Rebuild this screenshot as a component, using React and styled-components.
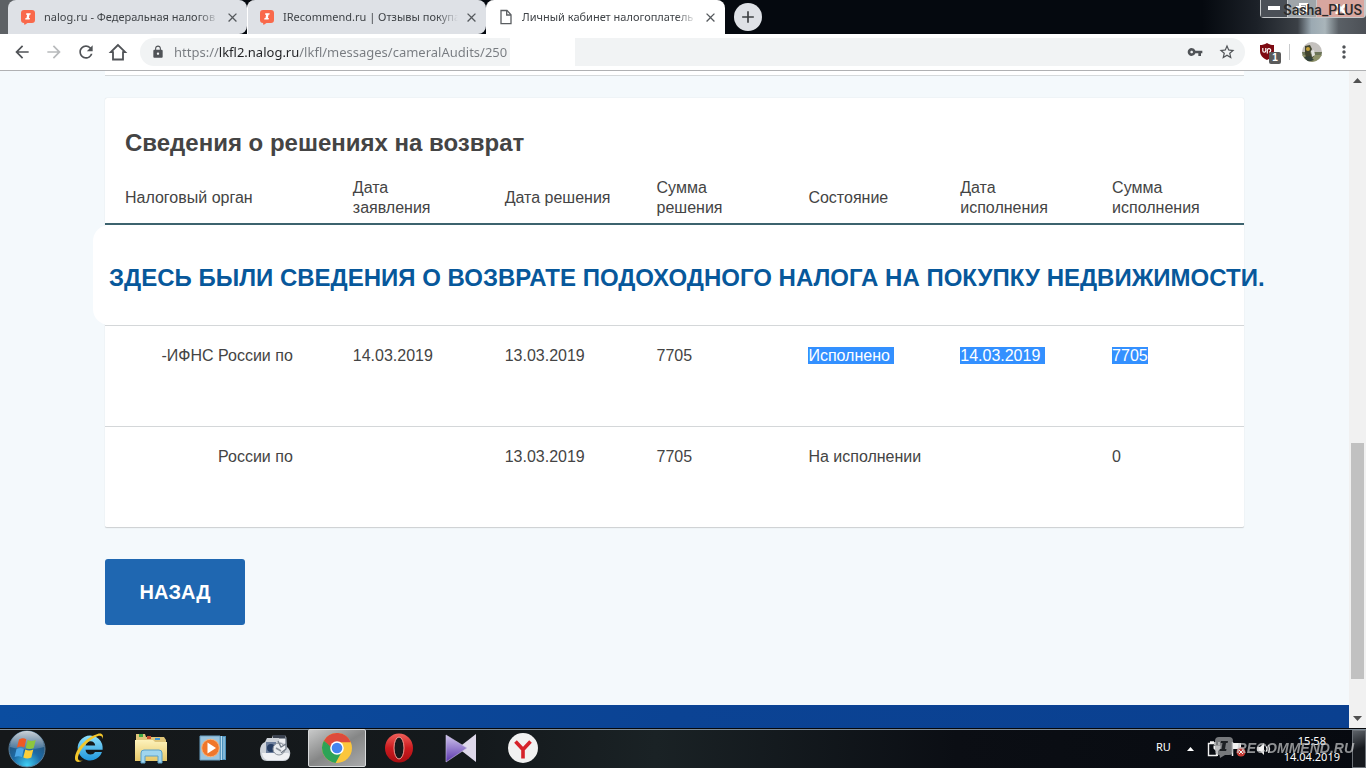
import React from "react";
import styled, { createGlobalStyle } from "styled-components";
import { MdArrowBack, MdArrowForward, MdRefresh, MdLock, MdVpnKey, MdStarBorder, MdMoreVert, MdClose, MdAdd } from "react-icons/md";

const tabs = [
    { title: "nalog.ru - Федеральная налогов", icon: "rec" },
    { title: "IRecommend.ru | Отзывы покупа", icon: "rec" },
    { title: "Личный кабинет налогоплатель", icon: "page", active: true },
];

const columns = [
    "Налоговый орган",
    "Дата заявления",
    "Дата решения",
    "Сумма решения",
    "Состояние",
    "Дата исполнения",
    "Сумма исполнения",
];

const rows = [
    { selected: true, cells: ["-ИФНС России по", "14.03.2019", "13.03.2019", "7705", "Исполнено ", "14.03.2019 ", "7705"] },
    { cells: ["России по", "", "13.03.2019", "7705", "На исполнении", "", "0"] },
];

function RecIcon () {
    return (
        <svg width="16" height="16" viewBox="0 0 16 16">
            <path d="M4 1h8a3 3 0 0 1 3 3v7a3 3 0 0 1-3 3H7.500L4.500 16 4 14a3 3 0 0 1-3-3V4a3 3 0 0 1 3-3z" fill="#f9694b" />
            <path d="M6.300 4.300h4.400l-.3 1.500H9.500L8.900 9h1l-.3 1.500H5.200l.3-1.500h1L7.100 5.800H6z" fill="#fff" />
        </svg>
    );
}

function PageIcon () {
    return (
        <svg width="16" height="16" viewBox="0 0 16 16" fill="none" stroke="#5a5d61" strokeWidth="1.300">
            <path d="M3 1.500h6l4 4.200v9H3z" />
            <path d="M8.700 1.500v4.500H13" />
        </svg>
    );
}

function HomeIcon () {
    return (
        <svg width="20" height="20" viewBox="0 0 20 20" fill="none" stroke="#505357" strokeWidth="1.800">
            <path d="M10 3l-7.200 7.200H5v7.300h10v-7.300h2.200z" />
        </svg>
    );
}

function ShieldIcon () {
    return (
        <svg width="16" height="18" viewBox="0 0 16 18">
            <path d="M8 0c2.500 1.600 4.500 2 7 2v6c0 4.500-3 7.200-7 9-4-1.800-7-4.500-7-9V2c2.500 0 4.500-.4 7-2z" fill="#7d0a12" />
            <path d="M3.800 5v2.700a1.500 1.500 0 0 0 3 0V5M8.300 10.500V7.200a1.700 1.700 0 1 1 1.700 1.900" fill="none" stroke="#fff" strokeWidth="1.200" />
        </svg>
    );
}

function Avatar () {
    return (
        <svg width="20" height="20" viewBox="0 0 20 20">
            <defs>
                <clipPath id="face"><circle cx="10" cy="10" r="10" /></clipPath>
            </defs>
            <g clipPath="url(#face)">
                <rect width="20" height="20" fill="#c4c1be" />
                <rect y="10" width="20" height="4" fill="#6c7457" />
                <rect y="13" width="20" height="7" fill="#8d9168" />
                <path d="M3 4l5-1 2 4-2 4 4 3-3 4-5-2-1-5z" fill="#42452f" />
                <circle cx="6" cy="7" r="2" fill="#c6a23a" />
                <path d="M9 9l3-1 1 5-3 2z" fill="#e2e2df" />
                <path d="M2 15l6-1 4 4-6 2z" fill="#33413a" />
            </g>
        </svg>
    );
}

function StartOrb () {
    return (
        <svg width="40" height="40" viewBox="0 0 40 40">
            <defs>
                <radialGradient id="orb" cx=".5" cy=".95" r=".9">
                    <stop offset="0" stopColor="#3fd0f5" />
                    <stop offset=".45" stopColor="#1d6aa5" />
                    <stop offset="1" stopColor="#294a68" />
                </radialGradient>
                <linearGradient id="orbShine" x2="0" y2="1">
                    <stop offset="0" stopColor="#fff" stopOpacity=".75" />
                    <stop offset="1" stopColor="#fff" stopOpacity=".15" />
                </linearGradient>
            </defs>
            <circle cx="20" cy="20" r="18" fill="url(#orb)" stroke="#5b7f9b" strokeWidth="1" />
            <path d="M3 18a17 16 0 0 1 34 0c-10 3-24 3-34 0z" fill="url(#orbShine)" />
            <path d="M12 10.500c3-1.600 5-1.400 7.300-.2l-2 8.200c-2.400-1.200-4.600-1.300-7.400 0z" fill="#ee5a24" />
            <path d="M20.700 11c2.600 1.200 5 1.200 8 0l-2 8.100c-2.800 1.200-5.500 1.200-8 0z" fill="#8dc63f" />
            <path d="M9.500 20c2.800-1.300 5-1.200 7.400 0l-2 8c-2.400-1.100-4.600-1.200-7.300 0z" fill="#4ba6e6" />
            <path d="M18.300 20.600c2.600 1.200 5.200 1.200 8 0l-2 8c-2.800 1.200-5.400 1.200-8 0z" fill="#fccf3a" />
        </svg>
    );
}

function ExplorerE () {
    return (
        <svg width="32" height="32" viewBox="0 0 32 32">
            <defs>
                <linearGradient id="ie" x2="0" y2="1">
                    <stop offset="0" stopColor="#8fe0fb" />
                    <stop offset="1" stopColor="#1f96dc" />
                </linearGradient>
            </defs>
            <path d="M29 20a12.500 12.500 0 1 1 .6-5.200v3H12.500c.3 3 2.200 4.700 5 4.700 2.100 0 3.500-.8 4.500-2.500zM12.600 13.500h9.600c-.2-2.700-2-4.300-4.700-4.300s-4.600 1.600-4.900 4.300z" fill="url(#ie)" />
            <path d="M29.500 7C31 3 29 .5 24.500 2 14 5 2 17 2 26.500c0 4 4 4.200 8 2-4 1-5.500-.5-5-3.500C6.500 17 17 6.500 25 4c3-.8 4.500.3 4.500 3z" fill="#f3c62b" />
        </svg>
    );
}

function FolderIcon () {
    return (
        <svg width="34" height="32" viewBox="0 0 34 32">
            <defs>
                <linearGradient id="folder" x2="0" y2="1">
                    <stop offset="0" stopColor="#fdf2bb" />
                    <stop offset="1" stopColor="#e6c767" />
                </linearGradient>
            </defs>
            <path d="M2 2h9l1 3h18l2 3v20H2z" fill="#dfc57a" />
            <path d="M5 2h4v3H5z" fill="#3fa845" />
            <path d="M13 4h4v3h-4z" fill="#c85032" />
            <path d="M21 6h5v2h-5z" fill="#3f94cf" />
            <path d="M1 8h18l2 2h12v19H1z" fill="url(#folder)" />
            <path d="M7 31V21q0-3 3-3h15q3 0 3 3v10h-4v-7H11v7z" fill="#9fd5ee" stroke="#5aa0c8" />
        </svg>
    );
}

function PlayerIcon () {
    return (
        <svg width="30" height="30" viewBox="0 0 30 30">
            <path d="M20 3h8v24h-8z" fill="#4d92bd" />
            <path d="M23.500 3v24M26 4v22" stroke="#b9dcf0" />
            <path d="M2 3h20v24H2z" fill="#9cc5de" stroke="#6ba2c6" />
            <circle cx="12.500" cy="15" r="8.800" fill="#f0772b" stroke="#f7b57e" />
            <path d="M9.500 9.500l8.500 5.500-8.500 5.500z" fill="#fff" />
        </svg>
    );
}

function CameraIcon () {
    return (
        <svg width="32" height="30" viewBox="0 0 32 30">
            <path d="M1 18q0-7 5-9l2-4h5l1-3h12l1 3 1 9q4 3 3 8-1 6-7 6H8q-7 0-7-10z" fill="#cdd2d9" />
            <path d="M3 20h26q2 0 1 4-2 3-6 3H9q-5 0-6-7z" fill="#f0f1f4" />
            <path d="M7 9h10v11H7z" fill="#6d7f9d" />
            <circle cx="12" cy="15" r="4" fill="#263d63" />
            <circle cx="20" cy="16" r="6" fill="#e8ebef" stroke="#8c939c" />
            <path d="M20 5h7v11l-5 4M19 8l3 6 5-3" stroke="#717a86" strokeWidth="1.300" fill="#eef0f3" />
            <path d="M14 2h12v3H14z" fill="#3a4250" />
            <path d="M17 15l5 3" stroke="#8c939c" strokeWidth="1.500" />
        </svg>
    );
}

function ChromeIcon () {
    return (
        <svg width="32" height="32" viewBox="0 0 32 32">
            <circle cx="16" cy="16" r="15" fill="#fbc63d" />
            <path d="M16 16L3 8.500A15 15 0 0 1 29.900 10.300H16z" fill="#de4b3c" />
            <path d="M3 8.500a15 15 0 0 0 11.500 22.400L21 19.500l-9.800.5z" fill="#2da357" />
            <path d="M3 8.500L16 9.300v6.700l-5 3z" fill="#de4b3c" />
            <path d="M3 8.500l7.700 13 4-2z" fill="#2da357" />
            <circle cx="16" cy="16" r="6.800" fill="#fff" />
            <circle cx="16" cy="16" r="5.300" fill="#4384ef" />
        </svg>
    );
}

function OperaIcon () {
    return (
        <svg width="30" height="30" viewBox="0 0 30 30">
            <defs>
                <linearGradient id="opera" x2="0" y2="1">
                    <stop offset="0" stopColor="#f0605a" />
                    <stop offset=".5" stopColor="#cc1b1f" />
                    <stop offset="1" stopColor="#a80d12" />
                </linearGradient>
            </defs>
            <ellipse cx="15" cy="15" rx="14" ry="14.500" fill="url(#opera)" />
            <ellipse cx="15" cy="15" rx="5" ry="11" fill="#16191c" stroke="#f29b92" />
        </svg>
    );
}

function KmpIcon () {
    return (
        <svg width="32" height="30" viewBox="0 0 32 30">
            <defs>
                <linearGradient id="kmp" x2="0" y2="1">
                    <stop offset="0" stopColor="#cfc4ec" />
                    <stop offset="1" stopColor="#5a35ad" />
                </linearGradient>
            </defs>
            <path d="M31 1v28L13 15z" fill="#ded8ea" />
            <path d="M1 2l21 13L1 29z" fill="url(#kmp)" stroke="#cfc6e6" strokeWidth=".6" />
        </svg>
    );
}

function YandexIcon () {
    return (
        <svg width="32" height="32" viewBox="0 0 32 32">
            <circle cx="16" cy="16" r="15" fill="#f1f1f1" />
            <path d="M8.500 9.500L16 17.500l7.500-8M16 17v9.500" fill="none" stroke="#d6222a" strokeWidth="3.600" />
        </svg>
    );
}

function TrayIcons () {
    return (
        <svg width="64" height="18" viewBox="0 0 64 18" fill="none" stroke="#f2f2f2">
            <path d="M7 3.500H1.500v12h8V12M3 2h4" strokeWidth="1.400" />
            <path d="M8 2v3M12 2v3" strokeWidth="1.500" />
            <path d="M6.500 5.500h7v3L11 11v5H9v-5L6.500 8.500z" fill="#f2f2f2" stroke="none" />
            <path d="M25.500 2v14" strokeWidth="1.500" />
            <path d="M26 3h8v6h-8z" fill="#f2f2f2" stroke="none" />
            <circle cx="34" cy="12" r="4.500" fill="#c73a34" stroke="none" />
            <path d="M32 10l4 4M36 10l-4 4" />
            <path d="M50 7h3l4-4v12l-4-4h-3z" fill="#f2f2f2" stroke="none" />
            <path d="M59 6q2 3 0 6M61.500 5q2.500 4 0 8" />
        </svg>
    );
}

function Bubble () {
    return (
        <svg width="20" height="24" viewBox="0 0 20 24">
            <path d="M5 1h10a4 4 0 0 1 4 4v10a4 4 0 0 1-4 4h-4l-5 3-.5-3A4.500 4.500 0 0 1 1 15V5a4 4 0 0 1 4-4z" fill="#a6a8aa" />
            <path d="M7 5h7l-.4 2H12l-1 6h1.500l-.4 2H5.500l.4-2H7.500l1-6H6.600z" fill="#26292c" />
        </svg>
    );
}

const apps = [
    { name: "Internet Explorer", icon: <ExplorerE /> },
    { name: "Проводник", icon: <FolderIcon /> },
    { name: "Проигрыватель", icon: <PlayerIcon /> },
    { name: "Камера", icon: <CameraIcon /> },
    { name: "Chrome", icon: <ChromeIcon />, active: true },
    { name: "Opera", icon: <OperaIcon /> },
    { name: "KMPlayer", icon: <KmpIcon /> },
    { name: "Яндекс", icon: <YandexIcon /> },
];

function Tab ({ tab }) {
    return (
        <TabBox $active={tab.active}>
            {tab.icon === "rec" ? <RecIcon /> : <PageIcon />}
            <TabTitle>{tab.title}</TabTitle>
            <TabClose aria-label="Закрыть"><MdClose size={15} /></TabClose>
        </TabBox>
    );
}

function Browser () {
    return (
        <>
            <TabStrip>
                {tabs.map(tab => <Tab key={tab.title} tab={tab} />)}
                <NewTab aria-label="Новая вкладка"><MdAdd size={20} /></NewTab>
                <WindowButtons>
                    <WinButton $kind="min" aria-label="Свернуть">
                        <svg width="12" height="5"><rect width="12" height="4" fill="#fff" /></svg>
                    </WinButton>
                    <WinButton $kind="max" aria-label="Развернуть">
                        <svg width="12" height="12" fill="none" stroke="#fff" strokeWidth="2"><path d="M4 3V1h7v7H9M1 4h7v7H1z" /></svg>
                    </WinButton>
                    <WinButton $kind="close" aria-label="Закрыть окно">
                        <svg width="12" height="10" stroke="#fff" strokeWidth="3"><path d="M1 0l10 10M11 0L1 10" /></svg>
                    </WinButton>
                    <UserMark>Sasha_PLUS</UserMark>
                </WindowButtons>
            </TabStrip>
            <Toolbar>
                <ToolButton aria-label="Назад"><MdArrowBack size={20} /></ToolButton>
                <ToolButton aria-label="Вперёд" disabled><MdArrowForward size={20} /></ToolButton>
                <ToolButton aria-label="Обновить"><MdRefresh size={20} /></ToolButton>
                <ToolButton aria-label="Домой"><HomeIcon /></ToolButton>
                <AddressBar>
                    <MdLock size={14} />
                    <AddressInput aria-label="Адрес" defaultValue="https://lkfl2.nalog.ru/lkfl/messages/cameralAudits/250" />
                    <Erased />
                    <AddressActions>
                        <MdVpnKey size={16} />
                        <MdStarBorder size={18} />
                    </AddressActions>
                </AddressBar>
                <Extension aria-label="uBlock">
                    <ShieldIcon />
                    <Badge>1</Badge>
                </Extension>
                <Divider />
                <ToolButton aria-label="Профиль"><Avatar /></ToolButton>
                <ToolButton aria-label="Меню"><MdMoreVert size={20} /></ToolButton>
            </Toolbar>
        </>
    );
}

function Decisions () {
    return (
        <Card>
            <h2>Сведения о решениях на возврат</h2>
            <Table>
                <thead>
                    <tr>
                        {columns.map(name => <th key={name}>{name}</th>)}
                    </tr>
                </thead>
                <tbody>
                    <tr>
                        <NoteCell colSpan={7}>
                            <Note>ЗДЕСЬ БЫЛИ СВЕДЕНИЯ О ВОЗВРАТЕ ПОДОХОДНОГО НАЛОГА НА ПОКУПКУ НЕДВИЖИМОСТИ.</Note>
                        </NoteCell>
                    </tr>
                    {rows.map((row, r) => (
                        <tr key={r}>
                            {row.cells.map((cell, i) => (
                                <Cell key={i} $office={i === 0}>
                                    {row.selected && i > 3 ? <Selected>{cell}</Selected> : cell}
                                </Cell>
                            ))}
                        </tr>
                    ))}
                </tbody>
            </Table>
        </Card>
    );
}

export default function App () {
    return (
        <Screen>
            <GlobalStyle />
            <Browser />
            <Viewport>
                <Page>
                    <Content>
                        <CardEnd />
                        <Decisions />
                        <BackButton>НАЗАД</BackButton>
                    </Content>
                    <Footer />
                </Page>
                <Scrollbar>
                    <svg width="9" height="5"><path d="M0 5l4.500-5L9 5z" fill="#505050" /></svg>
                    <Track>
                        <Thumb />
                    </Track>
                    <svg width="9" height="5"><path d="M0 0l4.500 5L9 0z" fill="#505050" /></svg>
                </Scrollbar>
            </Viewport>
            <Taskbar>
                <StartButton aria-label="Пуск"><StartOrb /></StartButton>
                {apps.map(app => <TaskButton key={app.name} aria-label={app.name} $active={app.active}>{app.icon}</TaskButton>)}
                <Tray>
                    <Language>RU</Language>
                    <svg width="7" height="5"><path d="M0 5l3.500-4L7 5z" fill="#fff" /></svg>
                    <TrayIcons />
                    <Clock>
                        <span>15:58</span>
                        <span>14.04.2019</span>
                    </Clock>
                    <ShowDesktop aria-label="Показать рабочий стол" />
                </Tray>
                <Watermark>
                    <Bubble />
                    <span>RECOMMEND.RU</span>
                </Watermark>
            </Taskbar>
        </Screen>
    );
}

const GlobalStyle = createGlobalStyle`
    * {
        box-sizing: border-box;
    }

    body {
        margin: 0;
        font-family: "Liberation Sans", Arial, sans-serif;
        color: #444;
    }

    button {
        border: none;
        padding: 0;
        background: none;
        font-family: inherit;
    }

    svg {
        display: block;
        flex-shrink: 0;
    }
`

const Screen = styled.div`
    display: flex;
    flex-direction: column;
    height: 100vh;
    overflow: hidden;
`

const TabStrip = styled.div`
    display: flex;
    flex-shrink: 0;
    height: 34px;
    padding-left: 8px;
    background: linear-gradient(90deg, #5d6165 0, #5d6165 10px, #05090f 60px, #05090f 88%, #1c2128 92%, #3b4046 95%, #9ba9b2 96%, #a9b5ba 97%, #5a6066 98%, #4c5056 100%);
`

const TabBox = styled.div`
    display: flex;
    align-items: center;
    width: 239px;
    padding: 0 7px 0 12px;
    border-radius: ${props => props.$active ? "8px 8px 0 0" : "8px 8px 8px 0"};
    background-color: ${props => props.$active ? "#fff" : "#dee1e6"};

    & + & {
        border-left: 1px solid ${props => props.$active ? "#fff" : "#9fa2a7"};
        padding-left: 11px;
    }
`

const TabTitle = styled.span`
    flex: 1;
    min-width: 0;
    margin: 0 5px 0 8px;
    overflow: hidden;
    white-space: nowrap;
    font-family: "Noto Sans", "Segoe UI", sans-serif;
    font-size: 11px;
    line-height: 16px;
    color: #3f4347;
    mask-image: linear-gradient(90deg, #000 88%, transparent);
`

const TabClose = styled.button`
    display: flex;
    align-items: center;
    justify-content: center;
    width: 16px;
    height: 16px;
    color: #55595d;
`

const NewTab = styled.button`
    display: flex;
    align-items: center;
    justify-content: center;
    width: 28px;
    height: 28px;
    margin: 3px 0 0 9px;
    border-radius: 14px;
    background-color: #dee1e6;
    color: #3c4043;
`

const WindowButtons = styled.div`
    position: relative;
    display: flex;
    height: 18px;
    margin-left: auto;
    border: 1px solid #c5c8ca;
    border-top: none;
    border-radius: 0 0 4px 4px;
`

const winColors = { min: "#4b5057", max: "#a0a6aa", close: "#d8a69f" };

const WinButton = styled.button`
    display: flex;
    align-items: center;
    justify-content: center;
    width: ${props => props.$kind === "close" ? "48px" : props.$kind === "max" ? "29px" : "27px"};
    background-color: ${props => winColors[props.$kind]};
    border-right: 1px solid #c5c8ca;
`

const UserMark = styled.span`
    position: absolute;
    right: 3px;
    top: 1px;
    font-family: Roboto, sans-serif;
    font-size: 14px;
    font-weight: 500;
    line-height: 18px;
    color: #2b2b2b;
`

const Toolbar = styled.div`
    display: flex;
    align-items: center;
    flex-shrink: 0;
    height: 37px;
    padding: 0 12px;
    background-color: #fff;
    border-bottom: 1px solid #b0b1b3;
`

const ToolButton = styled.button`
    display: flex;
    align-items: center;
    justify-content: center;
    width: 20px;
    height: 20px;
    margin-right: 12px;
    color: #505357;

    &:disabled {
        color: #b8babc;
    }

    &:last-child {
        margin-right: 0;
    }
`

const AddressBar = styled.div`
    display: flex;
    align-items: center;
    flex: 1;
    height: 28px;
    padding: 0 9px 0 11px;
    border-radius: 14px;
    background-color: #f1f3f4;
    color: #505357;
`

/* the host name is darker than the rest of the address */
const AddressInput = styled.input`
    width: 336px;
    margin-left: 9px;
    padding: 0;
    border: none;
    outline: none;
    font-family: "Noto Sans", "Segoe UI", sans-serif;
    font-size: 13px;
    line-height: 20px;
    color: #777b80;
    background: linear-gradient(90deg, #777b80 45px, #202124 45px, #202124 125px, #777b80 125px);
    -webkit-background-clip: text;
    background-clip: text;
    -webkit-text-fill-color: transparent;
`

const Erased = styled.div`
    width: 65px;
    height: 28px;
    background-color: #fff;
`

const AddressActions = styled.div`
    display: flex;
    align-items: center;
    gap: 15px;
    margin-left: auto;
`

const Extension = styled.button`
    position: relative;
    margin: 0 14px 0 14px;
`

const Badge = styled.span`
    position: absolute;
    left: 10px;
    top: 9px;
    width: 12px;
    height: 12px;
    border-radius: 2px;
    background-color: #5b5b5b;
    color: #fff;
    font-size: 10px;
    font-weight: 700;
    line-height: 12px;
`

const Divider = styled.div`
    width: 1px;
    height: 16px;
    margin-right: 12px;
    background-color: #c9cbcd;
`

const Viewport = styled.div`
    display: flex;
    flex: 1;
    min-height: 0;
`

const Page = styled.main`
    display: flex;
    flex-direction: column;
    flex: 1;
    min-width: 0;
    background-color: #f4f9fc;
`

const Content = styled.div`
    width: 100%;
    max-width: 1139px;
    margin: 0 auto;
`

const CardEnd = styled.div`
    height: 5px;
    margin-bottom: 22px;
    background-color: #fff;
    border-bottom: 1px solid #d5d9db;
`

const Card = styled.section`
    display: flow-root;
    background-color: #fff;
    border-radius: 2px;
    border-bottom: 1px solid #d0d3d5;
    box-shadow: 0 0 1px #c3cace;

    h2 {
        margin: 30px 0 0 20px;
        font-size: 24px;
        line-height: 30px;
        font-weight: 700;
    }
`

const Table = styled.table`
    width: 100%;
    table-layout: fixed;
    border-collapse: separate;
    border-spacing: 0;
    font-size: 16px;
    line-height: 20px;

    th {
        padding: 20px 40px 5px 20px;
        border-bottom: 2px solid #3c636e;
        font-weight: 400;
        text-align: left;
        vertical-align: middle;
    }

    th:first-child {
        width: 20%;
    }

    th:nth-child(3) {
        padding-right: 0;
    }
`

const NoteCell = styled.td`
    height: 100px;
    padding: 0;
`

const Note = styled.div`
    width: max-content;
    margin-left: -12px;
    padding: 38px 0 32px 16px;
    border-radius: 16px 0 0 16px;
    background: linear-gradient(90deg, #fff 1150px, transparent 1150px);
    color: #07589b;
    font-size: 24px;
    font-weight: 700;
    line-height: 30px;
    white-space: nowrap;
`

const Cell = styled.td`
    height: 101px;
    padding: ${props => props.$office ? "20px 40px 0 20px" : "20px 0 0 20px"};
    border-top: 1px solid #d4d7d9;
    text-align: ${props => props.$office ? "right" : "left"};
    vertical-align: top;
`

const Selected = styled.span`
    background-color: #3390ff;
    color: #fff;
    white-space: pre;
`

const BackButton = styled.button`
    width: 140px;
    height: 66px;
    margin-top: 31px;
    border-radius: 3px;
    background-color: #1f67b1;
    color: #fff;
    font-size: 20px;
    font-weight: 700;
`

const Footer = styled.footer`
    height: 23px;
    margin-top: auto;
    background: linear-gradient(90deg, #0b4da0, #0b4394 50%, #0a4090);
`

const Scrollbar = styled.div`
    display: flex;
    flex-direction: column;
    align-items: center;
    width: 17px;
    padding: 7px 0;
    background-color: #f1f1f1;
`

const Track = styled.div`
    display: flex;
    flex-direction: column;
    justify-content: flex-end;
    flex: 1;
    width: 13px;
    padding: 6px 0 37px;
`

const Thumb = styled.div`
    height: 40%;
    background-color: #c1c1c1;
`

const Taskbar = styled.div`
    position: relative;
    display: flex;
    flex-shrink: 0;
    height: 40px;
    border-top: 1px solid #05070a;
    box-shadow: inset 0 1px #7e8c98;
    background: linear-gradient(90deg, #15181a, #14191c 35%, #1a2225 48%, #0b0e14 70%, #070a10);
`

const StartButton = styled.button`
    width: 58px;
    padding-left: 7px;
`

const TaskButton = styled.button`
    display: flex;
    align-items: center;
    justify-content: center;
    width: 58px;
    height: 38px;
    margin: 0 2px;
    border: 1px solid ${props => props.$active ? "#d8dadb" : "transparent"};
    border-radius: 2px;
    background: ${props => props.$active ? "linear-gradient(150deg, #c8c9c9, #858686 50%, #a9aaab)" : "none"};
`

const Tray = styled.div`
    display: flex;
    align-items: center;
    margin-left: auto;
    color: #fff;
    font-family: "Noto Sans", "Segoe UI", sans-serif;
    font-size: 12px;

    > svg {
        margin-right: 13px;
    }
`

const Language = styled.span`
    margin: 0 16px 4px 0;
    font-size: 11px;
    line-height: 16px;
`

const Clock = styled.div`
    display: flex;
    flex-direction: column;
    align-items: center;
    margin-right: 12px;
    font-size: 11px;
    line-height: 16px;
`

const ShowDesktop = styled.button`
    width: 14px;
    height: 38px;
    border: 1px solid #6d7278;
    background: linear-gradient(160deg, #5d6268, #16191e 50%);
`

const Watermark = styled.div`
    position: absolute;
    right: 12px;
    top: 7px;
    display: flex;
    align-items: center;
    gap: 3px;
    opacity: .7;
    color: #c9cacb;
    font-size: 14px;
    font-style: italic;
    font-weight: 700;
    line-height: 20px;
`
